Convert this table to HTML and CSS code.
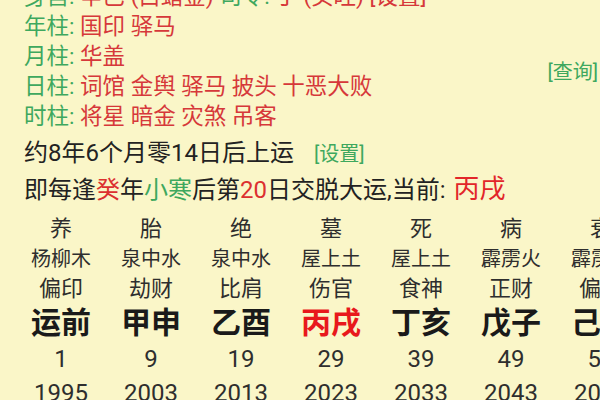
FILE: index.html
```html
<!DOCTYPE html>
<html lang="zh">
<head>
<meta charset="utf-8">
<title>大运</title>
<link rel="stylesheet" href="styles.css">
</head>
<body>
<div class="page">
  <div class="shensha">
    <div class="lines">
      <div class="line"><span class="lab">身宫:</span> <span class="val">辛巳 (白蜡金)</span> <span class="lab">司令:</span> <span class="val">丁 (癸旺) [设置]</span></div>
      <div class="line"><span class="lab">年柱:</span> <span class="val">国印 驿马</span></div>
      <div class="line"><span class="lab">月柱:</span> <span class="val">华盖</span></div>
      <div class="line"><span class="lab">日柱:</span> <span class="val">词馆 金舆 驿马 披头 十恶大败</span></div>
      <div class="line"><span class="lab">时柱:</span> <span class="val">将星 暗金 灾煞 吊客</span></div>
    </div>
    <div class="query">[查询]</div>
  </div>
  <div class="qiyun">
    <div class="qline">约8年6个月零14日后上运<span class="set">[设置]</span></div>
    <div class="qline">即每逢<span class="r">癸</span>年<span class="g">小寒</span>后第<span class="r">20</span>日交脱大运,当前: <span class="r cur">丙戌</span></div>
  </div>
  <div class="dayun">
    <div class="col"><div class="ss">养</div><div class="ny">杨柳木</div><div class="sg">偏印</div><div class="gz">运前</div><div class="age">1</div><div class="yr">1995</div></div>
    <div class="col"><div class="ss">胎</div><div class="ny">泉中水</div><div class="sg">劫财</div><div class="gz">甲申</div><div class="age">9</div><div class="yr">2003</div></div>
    <div class="col"><div class="ss">绝</div><div class="ny">泉中水</div><div class="sg">比肩</div><div class="gz">乙酉</div><div class="age">19</div><div class="yr">2013</div></div>
    <div class="col"><div class="ss">墓</div><div class="ny">屋上土</div><div class="sg">伤官</div><div class="gz now">丙戌</div><div class="age">29</div><div class="yr">2023</div></div>
    <div class="col"><div class="ss">死</div><div class="ny">屋上土</div><div class="sg">食神</div><div class="gz">丁亥</div><div class="age">39</div><div class="yr">2033</div></div>
    <div class="col"><div class="ss">病</div><div class="ny">霹雳火</div><div class="sg">正财</div><div class="gz">戊子</div><div class="age">49</div><div class="yr">2043</div></div>
    <div class="col"><div class="ss">衰</div><div class="ny">霹雳火</div><div class="sg">偏财</div><div class="gz">己丑</div><div class="age">59</div><div class="yr">2053</div></div>
  </div>
</div>
</body>
</html>
```
FILE: styles.css
```css
html, body {
  margin: 0;
  padding: 0;
}
body {
  width: 600px;
  height: 400px;
  overflow: hidden;
  background: #faf6c8;
  font-family: Roboto, "Noto Sans CJK SC", sans-serif;
  color: #222;
}
.page {
  margin-top: -19px;
  padding-left: 24px;
  padding-right: 2px;
}
.shensha {
  display: flex;
  justify-content: space-between;
}
.lines {
  font-size: 22.5px;
  line-height: 30px;
  white-space: nowrap;
}
.lab {
  color: #3ea85e;
}
.val {
  color: #d6383a;
}
.query {
  margin-top: 76px;
  font-size: 20px;
  line-height: 30px;
  color: #3ea85e;
  align-self: flex-start;
}
.qiyun {
  margin-top: 5px;
  font-size: 24px;
  line-height: 35px;
  white-space: nowrap;
}
.set {
  font-size: 20px;
  color: #3ea85e;
  margin-left: 20px;
}
.r {
  color: #dc3030;
}
.g {
  color: #3ea85e;
}
.cur {
  font-size: 26px;
  color: #e2262a;
  margin-left: 2px;
}
.dayun {
  display: flex;
  margin-top: 6px;
  margin-left: -8px;
}
.col {
  flex: 0 0 90px;
  text-align: center;
  white-space: nowrap;
  color: #2e2e2e;
}
.ss {
  font-size: 22px;
  line-height: 30px;
}
.ny {
  font-size: 20px;
  line-height: 30px;
}
.sg {
  font-size: 22px;
  line-height: 30px;
}
.gz {
  font-size: 30px;
  line-height: 38px;
  font-weight: 700;
  color: #1a1a1a;
}
.gz.now {
  color: #e8181c;
}
.age {
  font-size: 24px;
  line-height: 34px;
}
.yr {
  font-size: 24px;
  line-height: 34px;
}
```
